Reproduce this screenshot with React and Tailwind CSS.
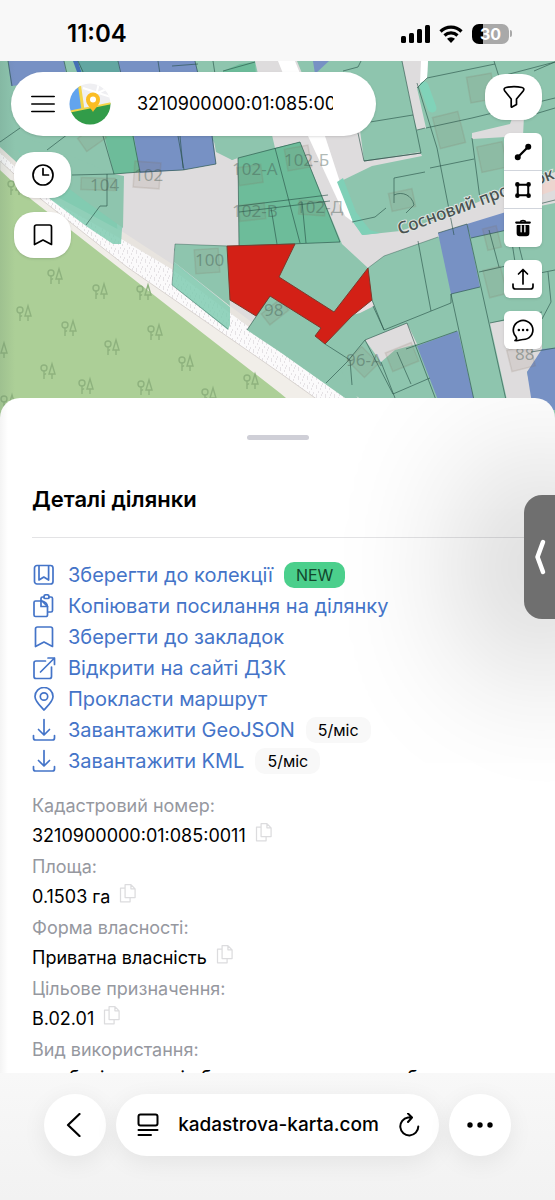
const strokeProps = {
    fill: 'none',
    stroke: 'currentColor',
    strokeLinecap: 'round',
    strokeLinejoin: 'round',
};

const Icon = ({ className = 'size-6', width = 1.7, children }) => (
    <svg viewBox="0 0 24 24" className={`shrink-0 ${className}`} {...strokeProps} strokeWidth={width} aria-hidden="true">
        {children}
    </svg>
);

const CollectionIcon = () => (
    <Icon>
        <rect x="2.5" y="2.5" width="18.5" height="18.5" rx="2.5" />
        <path d="M7 3v14l4.8-3 4.8 3V3" />
    </Icon>
);

const PasteIcon = () => (
    <Icon>
        <path d="M9 7V4.5A1.5 1.5 0 0 1 10.500 3H12M17 3h2a1.500 1.500 0 0 1 1.500 1.500v12A1.500 1.500 0 0 1 19 18h-2.500" />
        <path d="M12 2.500c0-1 1-1.800 2.500-1.800S17 1.500 17 2.500v1c0 .6-.5 1-1 1h-3c-.6 0-1-.4-1-1z" />
        <path d="M3.500 7H10l5.500 5.500v8.500a1.500 1.500 0 0 1-1.500 1.500H3.500A1.500 1.500 0 0 1 2 21V8.500A1.500 1.500 0 0 1 3.500 7z" />
        <path d="M9 7v5.500h6.500C15.500 10 13 7 9 7z" />
    </Icon>
);

const BookmarkIcon = () => (
    <Icon>
        <path d="M3.500 21.500V4A2 2 0 0 1 5.500 2h13a2 2 0 0 1 2 2v17.500L12 17z" />
    </Icon>
);

const ExternalIcon = () => (
    <Icon>
        <path d="M13.500 5H4a2 2 0 0 0-2 2v13.500a2 2 0 0 0 2 2h13.500a2 2 0 0 0 2-2V11" />
        <path d="M8.500 16 22.500 2M16 2h6.500v6.500" />
    </Icon>
);

const PinIcon = () => (
    <Icon>
        <path d="M12 23c-3-3.500-9-8.500-9-13.500a9 9 0 0 1 18 0C21 14.500 15 19.500 12 23z" />
        <circle cx="12" cy="9.500" r="3.700" />
    </Icon>
);

const DownloadIcon = () => (
    <Icon>
        <path d="M12 1.500v15M6.500 11.500l5.500 5.500 5.500-5.500M1.500 17.500v2.500a2 2 0 0 0 2 2h17a2 2 0 0 0 2-2v-2.500" />
    </Icon>
);

const CopyIcon = () => (
    <Icon className="size-5" width={1.5}>
        <path d="M8.500 2h7l5 5v10.500h-12zM15.500 2v5h5M8.500 6H3v16.500h11.500v-5" />
    </Icon>
);

const LogoIcon = () => (
    <svg viewBox="0 0 42 42" className="size-[42px] shrink-0" aria-hidden="true">
        <clipPath id="logo">
            <circle cx="21" cy="21" r="20.500" />
        </clipPath>
        <g clipPath="url(#logo)">
            <rect width="42" height="42" fill="#efeff2" />
            <path d="M14 5 42 14M20 14l22-10M30 0l-7 28M18 20l24 4" stroke="#fff" strokeWidth="2" />
            <path d="M0 0h10l4 26-14 3z" fill="#62a4ee" />
            <path d="M10-1 14 27" stroke="#f2d64b" strokeWidth="3" />
            <path d="m0 29 42-9v22H0z" fill="#329c49" />
            <path d="m-1 29 44-9" stroke="#f2d64b" strokeWidth="2" />
            <path d="M24 29c-2-4-7-7-7-12.500a7 7 0 0 1 14 0C31 22 26 25 24 29z" fill="#fbbd24" />
            <circle cx="24" cy="16.500" r="3" fill="#fff" />
        </g>
    </svg>
);

const trees = [
    [15, 187], [55, 276], [100, 291], [144, 292], [24, 313], [69, 328], [155, 332], [112, 347],
    [186, 363], [48, 371], [86, 386], [145, 387], [209, 395], [251, 381], [0, 350], [8, 402],
];

const blocks = [
    { fill: '#dedcdd', points: '114,174 140,172 183,170 216,164 212,140 232,160 240,156 241,246 176,245 174,250 230,300 258,316 247,331 172,285 118,240' },
    { fill: '#8ec5ae', points: '212,130 273,130 275,148 238,158 232,160 216,152' },
    { fill: '#6dbc9a', points: '103,130 133,130 140,172 114,174' },
    { fill: '#7791c4', points: '133,130 212,130 216,164 183,170 140,173' },
    { fill: '#7791c4', points: '8,61 64,61 67,80 11,86' },
    { fill: '#446fb5', points: '73,61 78,61 84,80 80,80' },
    { fill: '#62a6a1', points: '78,61 118,61 121,80 84,80' },
    { fill: '#7791c4', points: '118,61 195,61 200,80 121,80' },
    { fill: '#6dbc9a', points: '223,71 240,64 255,62 256,76 223,76' },
    { fill: '#dedcdd', points: '255,61 297,61 325,130 360,130 364,161 420,152 422,156 372,166 337,183 353,222 363,235 400,231 450,215 504,190 555,172 555,203 505,213 438,237 384,256 368,268 342,244 300,142 275,148' },
    { fill: '#fff', points: '278,61 295,61 325,136 353,222 345,216 308,136' },
    { fill: '#edd5cf', points: '505,194 555,176 555,190 505,208' },
    { fill: '#7fd0b7', points: '337,182 343,178 356,212 370,230 380,233 362,235 353,222' },
    { fill: '#dedcdd', points: '402,61 428,61 427,78 417,88 426,128 417,130 413,115' },
    { fill: '#fff', points: '421,61 428,61 427,78 420,84' },
    { fill: '#dedcdd', points: '472,133 510,124 513,116 524,116 523,136 472,139' },
    { fill: '#6dbc9a', points: '238,158 275,148 300,142 340,242 239,246' },
    { fill: '#7791c4', points: '313,61 329,61 315,74' },
    { fill: '#7791c4', points: '438,233 467,224 480,287 451,294' },
    { fill: '#7791c4', points: '467,224 506,212 507,230 471,238' },
    { fill: '#7791c4', points: '417,346 458,331 474,400 438,400' },
    { fill: '#dedcdd', points: '365,340 407,323 417,344 395,350 381,362' },
    { fill: '#dedcdd', points: '490,323 542,315 542,355 527,372 533,400 507,400' },
    { fill: '#7791c4', points: '527,372 542,349 555,348 555,410 533,410' },
    { fill: '#e9dde0', points: '352,315 372,300 374,306 360,313' },
];

const houses = [
    [98, 184, 34, 12, 2], [147, 175, 26, 26, 4], [207, 261, 24, 24, -4], [250, 175, 24, 18, -8],
    [252, 212, 26, 16, -6], [92, 138, 24, 16, -35], [298, 158, 24, 22, -10],
    [312, 208, 26, 14, 4], [481, 88, 25, 26, -10], [449, 130, 26, 32, -14], [492, 157, 26, 26, -12],
    [402, 200, 24, 18, -12], [363, 362, 24, 20, 45], [402, 357, 28, 20, -22], [495, 282, 18, 28, -14],
    [275, 312, 24, 14, -38], [492, 238, 14, 22, -14], [521, 358, 24, 22, -14],
];

const labels = [
    ['104', 90, 191], ['102', 134, 181], ['102-А', 232, 175], ['102-Б', 284, 166], ['102-В', 232, 217],
    ['102-Д', 296, 213], ['100', 195, 266], ['98', 264, 316], ['96-А', 346, 366], ['88', 515, 360],
];

const MapCanvas = () => (
    <svg viewBox="0 61 555 357" preserveAspectRatio="xMidYMin slice" className="absolute inset-0 size-full" aria-hidden="true">
        <defs>
            <pattern id="sand" width="9" height="9" patternUnits="userSpaceOnUse">
                <rect width="9" height="9" fill="#fbfafb" />
                <path d="M1 1h1M5 2h1M3 5h1M7 6h1M1 8h1M6 8h1" stroke="#cfcbcf" strokeWidth="1" />
            </pattern>
            <linearGradient id="edge">
                <stop offset="0" stopColor="#4b6b62" stopOpacity=".14" />
                <stop offset="1" stopColor="#4b6b62" stopOpacity="0" />
            </linearGradient>
            <g id="tree" fill="none" stroke="#8eb27e" strokeWidth="1.400">
                <circle cx="-4" cy="-3" r="3" />
                <path d="M-4 0v8M4-7 1 3h6zM4 3v5M-4 4l2-1.500" />
            </g>
        </defs>

        <rect y="61" width="555" height="357" fill="#8ec5ae" />
        {blocks.map((block, i) => (
            <polygon key={i} points={block.points} fill={block.fill} />
        ))}

        {/* forest and the walking path beside it */}
        <path d="M0 147 50 193 123 232 172 264 230 306 280 343 362 400 362 418H0z" fill="#e8e4df" />
        <path d="M0 153 50 199 123 240 173 270 230 313 280 350 350 400 350 418H0z" fill="url(#sand)" />
        <path d="M0 161 42 200 127 267 280 373 318 400 318 418H0z" fill="#f1eee9" stroke="#d8d3d0" />
        <path d="M0 170 32 200 72 231 173 310 280 393 310 418H0z" fill="#accf97" />
        {trees.map(([x, y]) => (
            <use key={`${x}-${y}`} href="#tree" x={x} y={y} />
        ))}

        <g fill="#80cbb2" fillOpacity=".85">
            <path d="M18 150 60 164 100 190 123 215 121 244 113 244 86 226 50 199z" />
            <path d="M174 262 230 307 230 325 228 330 172 285z" />
        </g>
        <g fill="#8ec5ae">
            <path d="M20 135 114 174 124 176 123 228 84 200 50 174 20 154z" />
            <path d="M175 244 227 246 230 306 174 262z" />
            <path d="M270 296 321 328 325 344 365 410H362L280 352 247 330z" />
        </g>

        <g fill="#8a7565" fillOpacity=".12" stroke="#806f60" strokeOpacity=".16" strokeWidth="1.500">
            {houses.map(([x, y, w, h, angle], i) => (
                <rect key={i} x={x - w / 2} y={y - h / 2} width={w} height={h} transform={`rotate(${angle} ${x} ${y})`} />
            ))}
        </g>
        <path d="M424 86 432 108" stroke="#80d3b9" strokeWidth="9" strokeLinecap="round" />

        <g fill="none" stroke="#254f45" strokeOpacity=".6" strokeWidth="1">
            <path d="M0 142 20 128M47 150 68 134M72 175 114 174 103 136M114 174 140 172 133 136M178 136 184 170M180 136 183 168M140 172 183 170 216 164 212 136M107 174V206H100L86 225" />
            <path d="M238 158 300 142 340 242 239 246zM275 148 300 243M239 206 328 195M239 212 330 201M271 208 277 244M302 202 306 243" />
            <path d="M8 61 12 86M64 61 67 74M78 61 84 74M118 61 121 74M158 61 160 74M172 66 198 64M195 61 198 74M223 71 255 62M213 61 215 74M343 71 358 67 361 61" />
            <path d="M370 122 413 115M402 61 421 153 364 161 358 133M417 83 437 148 454 235M417 88 427 78M426 128 472 118 555 98M427 78 495 64M494 61 500 80M417 130 425 128M472 138 480 199M394 188V178L425 172M430 168 474 159M525 117 555 108M534 71 555 62M498 77 555 62" />
            <path d="M394 188v15M394 195c8-4 18 0 20 10l-8 8M352 222 375 217 386 208M364 161 421 153" />
            <path d="M418 241 431 311M384 330 451 303 451 294 480 287M438 233 467 224 506 400M451 294 474 400M373 306 384 330M384 330 372 300M365 340 407 323 436 400M365 340 347 362 326 383M365 340 393 394 430 378M325 344 350 360M381 362 395 398M270 296 247 330M397 352 411 384M457 331 406 349M471 238 507 230M479 272 506 266M489 230 499 267M507 210 515 262M519 246 530 290M540 273 555 270M548 272 551 302 542 319M507 212 555 200M490 323 542 312M531 352 555 348M350 360 352 385" />
            <path d="M175 244 227 246M175 244 172 285 228 329M368 268 384 256 438 237" strokeOpacity=".4" />
        </g>

        <path
            d="M227 246 295 244 279 277 334 312 368 268 372 300 352 316 325 344 315 336 321 328 270 296 256 316 230 300z"
            fill="#d32016"
            stroke="#7c3a2c"
        />

        <g fontSize="17" fill="#41564e" fillOpacity=".42" className="font-['Noto_Sans']">
            {labels.map(([label, x, y]) => (
                <text key={label} x={x} y={y}>{label}</text>
            ))}
        </g>
        <text
            transform="translate(400 235) rotate(-20)"
            fontSize="17"
            fontWeight="500"
            fill="#4a5351"
            stroke="#dfe4e1"
            strokeWidth="2"
            paintOrder="stroke"
            className="font-['Noto_Sans']"
        >
            Сосновий провулок
        </text>
        <rect y="61" width="15" height="357" fill="url(#edge)" />
    </svg>
);

const roundButton = 'flex h-[46px] w-[57px] items-center justify-center rounded-[20px] bg-white shadow-sm';
const toolButton = 'flex h-[38px] w-[38px] items-center justify-center';

const StatusBar = () => (
    <header className="flex h-[61px] shrink-0 items-center justify-between bg-[#f8f8f8] pt-[6px] pr-[43px] pl-[67px]">
        <time className="text-2xl font-semibold">11:04</time>
        <div className="flex items-center gap-[9px]">
            <svg viewBox="0 0 29 18" className="h-[18px] w-[29px]" aria-label="Сигнал">
                <rect y="11" width="5" height="7" rx="1.500" />
                <rect x="8" y="8" width="5" height="10" rx="1.500" />
                <rect x="16" y="4" width="5" height="14" rx="1.500" />
                <rect x="24" width="5" height="18" rx="1.500" />
            </svg>
            <svg viewBox="0 0 24 18" className="h-[18px] w-6" aria-label="Wi-Fi">
                <path d="M1.500 6.500a15 15 0 0 1 21 0M5.500 10.500a9.500 9.500 0 0 1 13 0" fill="none" stroke="#000" strokeWidth="3.200" />
                <path d="M12 18 8 13.800a5.800 5.800 0 0 1 8 0z" />
            </svg>
            <div className="flex items-center gap-px">
                <div className="flex h-5 w-[37px] items-center justify-center rounded-[7px] bg-linear-to-r from-black from-30% to-[#a9a9a9] to-30% text-base font-bold text-white">
                    30
                </div>
                <div className="h-[7px] w-[2px] rounded-r-full bg-[#a9a9a9]" />
            </div>
        </div>
    </header>
);

const MapSection = () => (
    <section className="relative h-[357px] shrink-0 overflow-hidden">
        <MapCanvas />
        <div className="relative flex justify-between pt-[11px] pr-[13px] pl-[11px]">
            <div className="flex max-w-[365px] flex-1 flex-col gap-4">
                <div className="flex h-16 items-center rounded-[32px] bg-white pr-[43px] pl-5 shadow-sm">
                    <button type="button" aria-label="Меню">
                        <Icon>
                            <path d="M.8 4.500h22.400M.8 12h22.400M.8 19.500h22.400" />
                        </Icon>
                    </button>
                    <a href="#home" aria-label="Кадастрова карта" className="ml-[14px]">
                        <LogoIcon />
                    </a>
                    <input
                        type="text"
                        aria-label="Пошук ділянки"
                        defaultValue="3210900000:01:085:0011"
                        className="ml-[26px] w-full min-w-0 bg-transparent text-lg outline-none"
                    />
                </div>
                <div className="ml-[3px] flex flex-col gap-[14px]">
                    <button type="button" aria-label="Історія" className={roundButton}>
                        <Icon>
                            <circle cx="12" cy="12" r="10" />
                            <path d="M12 5.500V12h5.500" />
                        </Icon>
                    </button>
                    <button type="button" aria-label="Закладки" className={roundButton}>
                        <BookmarkIcon />
                    </button>
                </div>
            </div>

            <div className="flex flex-col items-end gap-[13px] pt-[2px]">
                <button type="button" aria-label="Фільтр" className={roundButton}>
                    <Icon>
                        <path d="M4 2.500c5-1 11-1 16 0 2 .4 2.300 2 1.200 3.500L14.500 14v5.500L10 22c-.5.300-.8 0-.8-.5V14L2.800 6C1.700 4.500 2 2.900 4 2.500z" />
                    </Icon>
                </button>
                <div className="divide-y divide-gray-300 rounded-md bg-white shadow-sm">
                    <button type="button" aria-label="Виміряти відстань" className={toolButton}>
                        <Icon className="size-[18px]" width={3}>
                            <path d="M6 18 18 6" />
                            <circle cx="5" cy="19" r="2.500" fill="currentColor" />
                            <circle cx="19" cy="5" r="2.500" fill="currentColor" />
                        </Icon>
                    </button>
                    <button type="button" aria-label="Виміряти площу" className={toolButton}>
                        <Icon className="size-[18px]" width={2.7}>
                            <rect x="5" y="5" width="14" height="14" />
                            <g fill="currentColor">
                                <circle cx="4.500" cy="4.500" r="1.700" />
                                <circle cx="19.500" cy="4.500" r="1.700" />
                                <circle cx="4.500" cy="19.500" r="1.700" />
                                <circle cx="19.500" cy="19.500" r="1.700" />
                            </g>
                        </Icon>
                    </button>
                    <button type="button" aria-label="Видалити" className={toolButton}>
                        <Icon className="size-[18px]" width={2}>
                            <path d="M9 3.500c0-2 6-2 6 0" />
                            <path d="M3 4.800h18" strokeWidth="3" />
                            <path d="M4.500 9h15v10a3 3 0 0 1-3 3h-9a3 3 0 0 1-3-3z" fill="currentColor" />
                            <path d="M9.500 9v8M14.500 9v8" stroke="#fff" strokeWidth="1.800" />
                        </Icon>
                    </button>
                </div>
                <button type="button" aria-label="Поділитися" className={`${toolButton} rounded-md bg-white shadow-sm`}>
                    <Icon>
                        <path d="M12 17V2.500M7.500 7 12 2.500 16.500 7M2 17v2.500a2.500 2.500 0 0 0 2.500 2.500h15a2.500 2.500 0 0 0 2.500-2.500V17" />
                    </Icon>
                </button>
                <button type="button" aria-label="Чат" className={`${toolButton} rounded-md bg-white shadow-sm`}>
                    <Icon>
                        <path d="M4 22.500c2-1 2-2.500.5-4.500A9.800 9.500 0 1 1 12 21.500c-2.500 0-4.500 1.500-8 1z" />
                        <path d="M7.800 12h.1M12 12h.1M16.200 12h.1" strokeWidth="2.400" />
                    </Icon>
                </button>
            </div>
        </div>
    </section>
);

const actions = [
    { label: 'Зберегти до колекції', icon: CollectionIcon, badge: 'NEW' },
    { label: 'Копіювати посилання на ділянку', icon: PasteIcon },
    { label: 'Зберегти до закладок', icon: BookmarkIcon },
    { label: 'Відкрити на сайті ДЗК', icon: ExternalIcon },
    { label: 'Прокласти маршрут', icon: PinIcon },
    { label: 'Завантажити GeoJSON', icon: DownloadIcon, badge: '5/міс' },
    { label: 'Завантажити KML', icon: DownloadIcon, badge: '5/міс' },
];

const details = [
    { label: 'Кадастровий номер:', value: '3210900000:01:085:0011', copy: true },
    { label: 'Площа:', value: '0.1503 га', copy: true },
    { label: 'Форма власності:', value: 'Приватна власність', copy: true },
    { label: 'Цільове призначення:', value: 'B.02.01', copy: true },
    { label: 'Вид використання:', value: 'для будівництва і обслуговування жилого будинку' },
];

const DetailsSheet = () => (
    <main className="relative -mt-5 min-h-0 flex-1 overflow-hidden rounded-t-[20px] bg-white bg-linear-to-r from-[#f4f4f4] to-white to-[8px] px-8 pt-[37px]">
        <button
            type="button"
            aria-label="Відкрити панель"
            className="absolute top-[97px] right-0 flex h-[124px] w-[31px] items-center justify-center rounded-l-[18px] bg-[#6f6f6f] shadow-[0_10px_150px_30px_rgba(0,0,0,0.32)]"
        >
            <svg viewBox="0 0 12 36" className="h-9 w-3" fill="none" stroke="#fff" strokeWidth="4.500" strokeLinecap="round" strokeLinejoin="round">
                <path d="M9 3 3.500 18 9 33" />
            </svg>
        </button>

        <div className="relative mx-auto h-[5px] w-[62px] rounded-full bg-[#cfcfd7]" />
        <h1 className="relative mt-[43px] text-[22px] leading-8 font-semibold">Деталі ділянки</h1>
        <hr className="mt-[22px] -mr-2 border-[#e3e3e5]" />

        <ul className="relative mt-[21px]">
            {actions.map(({ label, icon: ActionIcon, badge }) => (
                <li key={label} className="flex h-[31px] items-center text-[20px] text-[#4474c8]">
                    <a href="#action" className="flex items-center gap-3">
                        <ActionIcon />
                        {label}
                    </a>
                    {badge && (
                        <span
                            className={`ml-[11px] flex h-[26px] items-center rounded-[10px] px-3 text-base ${
                                badge === 'NEW' ? 'bg-[#4bcf8c] text-[#12472c]' : 'bg-[#f8f8f8] text-black'
                            }`}
                        >
                            {badge}
                        </span>
                    )}
                </li>
            ))}
        </ul>

        <dl className="relative mt-[14px] text-lg">
            {details.map((item) => (
                <div key={item.label}>
                    <dt className="h-[30px] leading-8 text-[#96989f]">{item.label}</dt>
                    <dd className={`flex items-center gap-2 whitespace-nowrap ${item.copy ? 'h-[31px]' : 'h-7'}`}>
                        {item.value}
                        {item.copy && (
                            <button type="button" aria-label="Копіювати" className="mb-[7px] text-[#dcdcde]">
                                <CopyIcon />
                            </button>
                        )}
                    </dd>
                </div>
            ))}
        </dl>
    </main>
);

const BrowserBar = () => (
    <footer className="flex h-[127px] shrink-0 gap-[10px] bg-linear-to-b from-[#f8f8f8] to-[#f2f2f2] px-11 pt-[21px]">
        <button type="button" aria-label="Назад" className="flex size-[62px] shrink-0 items-center justify-center rounded-full bg-white shadow-[0_6px_24px_rgba(0,0,0,0.07)]">
            <Icon width={2.2}>
                <path d="M16.500 1 5 12l11.500 11" />
            </Icon>
        </button>
        <div className="flex h-[62px] flex-1 items-center justify-between rounded-full bg-white px-[18px] pl-[20px] shadow-[0_6px_24px_rgba(0,0,0,0.07)]">
            <button type="button" aria-label="Режим читання">
                <Icon width={2}>
                    <rect x="2.500" y="1.500" width="19" height="11" rx="2" />
                    <path d="M2.500 17h19M2.500 22h12.500" />
                </Icon>
            </button>
            <span className="text-[19px] font-medium">kadastrova-karta.com</span>
            <button type="button" aria-label="Оновити">
                <Icon width={2}>
                    <path d="M14 4.500H11a9 9 0 1 0 10.300 9M11 .5 15 4.500 11 9" />
                </Icon>
            </button>
        </div>
        <button type="button" aria-label="Ще" className="flex size-[62px] shrink-0 items-center justify-center rounded-full bg-white shadow-[0_6px_24px_rgba(0,0,0,0.07)]">
            <svg viewBox="0 0 26 6" className="h-[6px] w-[26px]">
                <circle cx="3" cy="3" r="2.700" />
                <circle cx="13" cy="3" r="2.700" />
                <circle cx="23" cy="3" r="2.700" />
            </svg>
        </button>
    </footer>
);

const App = () => (
    <div className="flex h-screen flex-col overflow-hidden bg-white font-['Inter',sans-serif] text-black">
        <StatusBar />
        <MapSection />
        <DetailsSheet />
        <BrowserBar />
    </div>
);

export default App;
